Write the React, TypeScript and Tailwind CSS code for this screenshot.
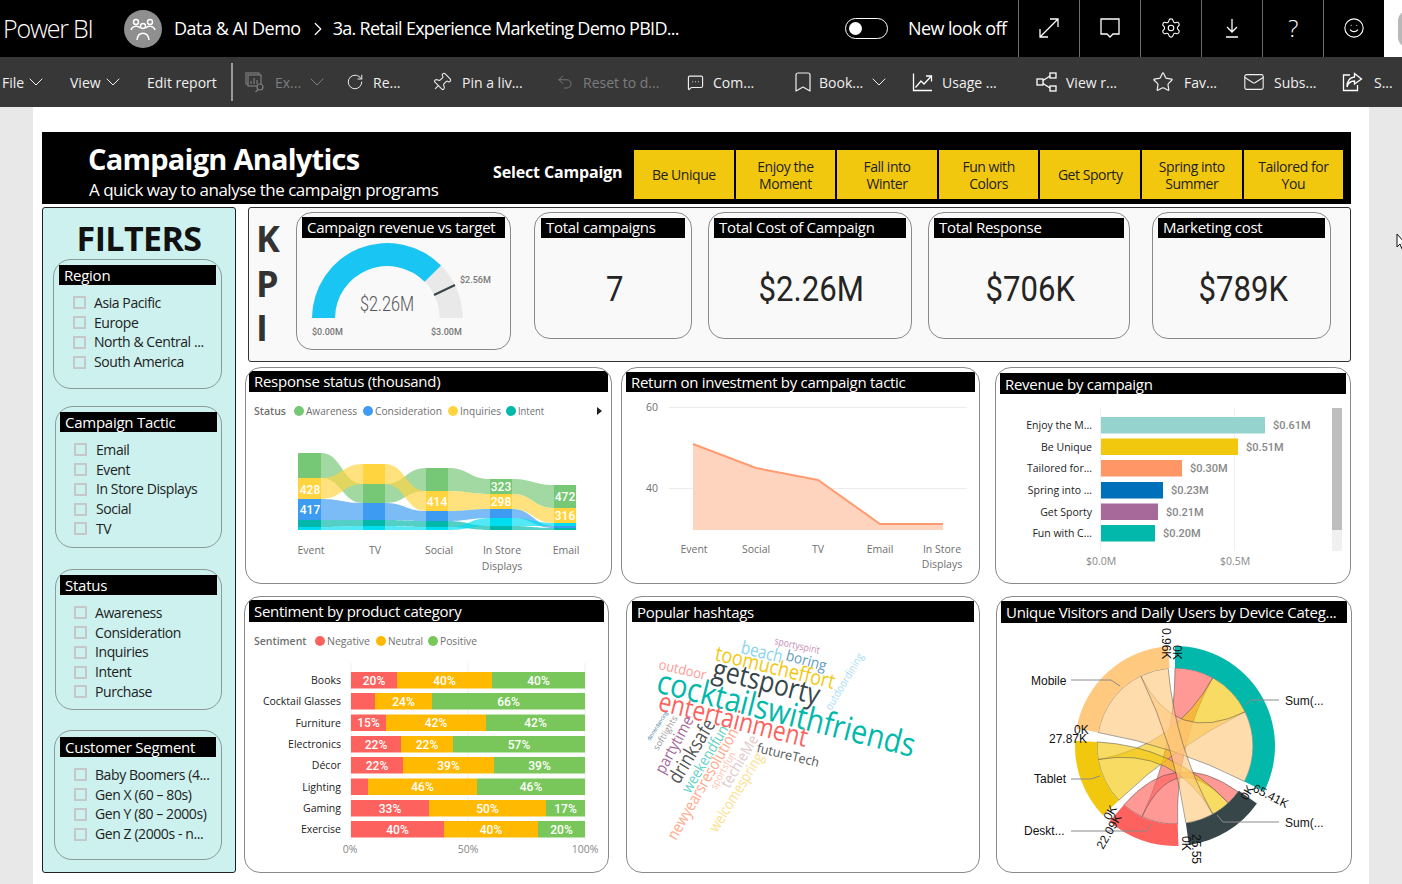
import clsx from "clsx";
import type { ReactNode } from "react";
import {
  Bookmark,
  ChevronDown,
  ChevronRight,
  Mail,
  MessageSquareMore,
  Pin,
  RotateCw,
  Settings,
  Smile,
  Star,
  Undo2,
} from "lucide-react";

const din = "font-['Roboto',sans-serif]";

function ExploreIcon() {
  return (
    <svg width="21" height="21" viewBox="0 0 21 21" fill="none" stroke="#7d7d7d" strokeWidth="1.2">
      <rect x="1" y="1" width="13" height="11" />
      <rect x="3" y="3" width="13" height="11" fill="#373737" />
      <path d="M6 12V9M9 12V6M12 12V8" />
      <circle cx="15" cy="15" r="3" fill="#373737" />
      <path d="M13 17.5l-2.5 2.5" />
    </svg>
  );
}

function RelatedIcon() {
  return (
    <svg width="21" height="20" viewBox="0 0 21 20" fill="none" stroke="#fff" strokeWidth="1.3">
      <rect x="1" y="7" width="6" height="6" />
      <rect x="14" y="1" width="6" height="5" />
      <rect x="14" y="14" width="6" height="5" />
      <path d="M7 8.5L14 4M7 11.5L14 16" />
    </svg>
  );
}

function UsageIcon() {
  return (
    <svg width="21" height="20" viewBox="0 0 21 20" fill="none" stroke="#fff" strokeWidth="1.3">
      <path d="M1.5 1.5v17h18.500" />
      <path d="M3.500 15.500l5.500-6.500 3 3 7-7.500" />
      <path d="M14 4h5.500v5.500" />
    </svg>
  );
}

function ShareIcon() {
  return (
    <svg width="21" height="20" viewBox="0 0 21 20" fill="none" stroke="#fff" strokeWidth="1.3">
      <path d="M8 3H1.5v15.5h14V13" />
      <path d="M12.5 1.5l7 5.5-7 5V9C8.5 9 6 11 5 15c0-6 3-9.500 7.500-10z" />
    </svg>
  );
}

const tools = [
  { label: "File", box: "w-[68px]", chevron: true },
  { label: "View", box: "w-[77px]", chevron: true },
  { label: "Edit report", box: "w-[84px]" },
  { label: "Ex...", box: "w-[101px] ml-[12px]", icon: <ExploreIcon />, iconBox: "w-[30px]", off: true, chevron: true, chevronBox: "ml-[4px]" },
  { label: "Re...", box: "w-[85px]", icon: <RotateCw size={18} strokeWidth={1.3} />, iconBox: "w-[27px]" },
  { label: "Pin a liv...", box: "w-[125px]", icon: <Pin size={21} strokeWidth={1.2} className="rotate-45" />, iconBox: "w-[31px]" },
  { label: "Reset to d...", box: "w-[131px]", icon: <Undo2 size={18} strokeWidth={1.2} color="#7d7d7d" />, iconBox: "w-[27px]", off: true },
  { label: "Com...", box: "w-[104px]", icon: <MessageSquareMore size={17} strokeWidth={1.6} />, iconBox: "w-[26px]" },
  { label: "Book...", box: "w-[121px]", icon: <Bookmark size={24} strokeWidth={1.2} />, iconBox: "w-[28px]", chevron: true, chevronBox: "ml-[4px]" },
  { label: "Usage ...", box: "w-[124px]", icon: <UsageIcon />, iconBox: "w-[30px]" },
  { label: "View r...", box: "w-[116px]", icon: <RelatedIcon />, iconBox: "w-[30px]" },
  { label: "Fav...", box: "w-[91px]", icon: <Star size={22} strokeWidth={1.3} />, iconBox: "w-[32px]" },
  { label: "Subs...", box: "w-[99px]", icon: <Mail size={22} strokeWidth={1.2} />, iconBox: "w-[31px]" },
  { label: "S...", box: "w-[60px]", icon: <ShareIcon />, iconBox: "w-[32px]" },
];

function TopBar() {
  return (
    <div className="h-[57px] bg-black text-white flex items-center text-[18px] tracking-[-0.5px]">
      <span className="ml-[3px] w-[121px] text-[25px] font-light tracking-[-1.2px]">Power BI</span>
      <div className="w-[38px] h-[38px] rounded-full bg-[#8f8f8f] flex items-center justify-center">
        <svg width="28" height="26" viewBox="0 0 28 26" fill="none" stroke="#fff" strokeWidth="1.4">
          <circle cx="7" cy="6" r="2.500" />
          <circle cx="21" cy="6" r="2.500" />
          <circle cx="14" cy="10" r="2.500" />
          <path d="M2 14c1-4 7-5 9-2M26 14c-1-4-7-5-9-2M8 24c1-9 11-9 12 0" />
        </svg>
      </div>
      <span className="ml-[12px]">Data &amp; AI Demo</span>
      <ChevronRight size={22} strokeWidth={1.3} className="ml-[6px] mr-[4px]" />
      <span className="tracking-[-0.72px]">3a. Retail Experience Marketing Demo PBID...</span>
      <div className="ml-auto flex items-center h-full">
        <div className="w-[43px] h-[21px] rounded-full border-[1.5px] border-white flex items-center pl-[3px]">
          <div className="w-[13px] h-[13px] rounded-full bg-white" />
        </div>
        <span className="ml-[20px] w-[110px] tracking-[-0.6px]">New look off</span>
        <HeaderCell>
          <svg width="22" height="22" viewBox="0 0 22 22" fill="none" stroke="#fff" strokeWidth="1.3">
            <path d="M2 20L20 2M12 2h8v8M2 12v8h8" />
          </svg>
        </HeaderCell>
        <HeaderCell>
          <svg width="22" height="22" viewBox="0 0 22 22" fill="none" stroke="#fff" strokeWidth="1.3">
            <path d="M2 2h18v15h-6l-3 3-3-3H2z" />
          </svg>
        </HeaderCell>
        <HeaderCell>
          <Settings size={22} strokeWidth={1.2} />
        </HeaderCell>
        <HeaderCell>
          <svg width="16" height="22" viewBox="0 0 16 22" fill="none" stroke="#fff" strokeWidth="1.3">
            <path d="M8 2v13M3 10l5 5 5-5M2 20h12" />
          </svg>
        </HeaderCell>
        <HeaderCell>
          <span className="text-[24px] font-light">?</span>
        </HeaderCell>
        <HeaderCell>
          <Smile size={22} strokeWidth={1.2} />
        </HeaderCell>
        <div className="w-[18px] h-full bg-white overflow-hidden flex items-center">
          <div className="ml-[14px] w-[22px] h-[38px] shrink-0 rounded-full bg-[#b8b8b8]" />
        </div>
      </div>
    </div>
  );
}

function HeaderCell({ children }: { children: ReactNode }) {
  return (
    <div className="w-[61px] h-full border-l border-[#6b6b6b] flex items-center justify-center pb-[2px]">
      {children}
    </div>
  );
}

function ToolBar() {
  return (
    <div className="h-[50px] bg-[#373737] text-[#f0f0f0] text-[14px] flex items-center pl-[2px] whitespace-nowrap">
      {tools.map((t, i) => (
        <div key={t.label} className="contents">
          <div className={clsx("flex items-center", t.box, t.off && "text-[#7d7d7d]")}>
            {t.icon && <span className={clsx("flex items-center", t.iconBox)}>{t.icon}</span>}
            <span>{t.label}</span>
            {t.chevron && <ChevronDown size={24} strokeWidth={1} className={t.chevronBox} />}
          </div>
          {i === 2 && <div className="w-[2px] h-[38px] bg-[#9a9a9a]" />}
        </div>
      ))}
    </div>
  );
}

const campaigns = ["Be Unique", "Enjoy the Moment", "Fall into Winter", "Fun with Colors", "Get Sporty", "Spring into Summer", "Tailored for You"];

function ReportHeader() {
  return (
    <div className="h-[72px] bg-black text-white flex">
      <div className="ml-[46px] w-[405px] flex flex-col">
        <span className="mt-[7px] text-[29px] leading-[40px] font-bold tracking-[-0.75px]">Campaign Analytics</span>
        <span className="ml-[1px] mt-[1px] text-[17px] leading-[20px] tracking-[-0.5px]">A quick way to analyse the campaign programs</span>
      </div>
      <span className="mt-[29px] w-[141px] text-[16px] leading-[22px] font-bold tracking-[-0.15px]">Select Campaign</span>
      <div className="mt-[18px] flex gap-[2px]">
        {campaigns.map((c) => (
          <div
            key={c}
            className="w-[99.600px] h-[49px] bg-[#f2c80f] text-[#222] text-[14px] leading-[17px] tracking-[-0.45px] flex items-center justify-center text-center px-[12px]"
          >
            {c}
          </div>
        ))}
      </div>
    </div>
  );
}

function Slicer({ title, items, box, bar, list }: { title: string; items: string[]; box: string; bar: string; list: string }) {
  return (
    <div className={clsx("rounded-[18px] border border-[#8c9a98]", box)}>
      <div className={clsx("h-[20px] bg-black text-white text-[15px] leading-[20px] pl-[5px] tracking-[-0.25px]", bar)}>{title}</div>
      <div className={clsx("mt-[8px] text-[14px] leading-[20px] text-[#222] tracking-[-0.42px]", list)}>
        {items.map((item) => (
          <div key={item} className="h-[19.750px] flex items-center whitespace-nowrap">
            <span className="w-[13px] h-[13px] border-2 border-[#c4c8c8] shrink-0 mr-[8px]" />
            {item}
          </div>
        ))}
      </div>
    </div>
  );
}

function Filters() {
  return (
    <div className="w-[194px] h-[666px] shrink-0 bg-[#ccf1ee] border border-[#222] rounded-[3px] pt-[10px]">
      <div className="h-[41px] text-[34px] leading-[40px] font-bold text-center text-[#111] tracking-[-0.6px]">FILTERS</div>
      <Slicer
        title="Region"
        items={["Asia Pacific", "Europe", "North & Central ...", "South America"]}
        box="ml-[10px] w-[169px] h-[130px] pt-[5px]"
        bar="mx-[5px]"
        list="ml-[19px]"
      />
      <Slicer
        title="Campaign Tactic"
        items={["Email", "Event", "In Store Displays", "Social", "TV"]}
        box="mt-[17px] ml-[12px] w-[167px] h-[142px] pt-[5px]"
        bar="mx-[4px]"
        list="ml-[18px] [&>div>span]:mr-[9px]"
      />
      <Slicer
        title="Status"
        items={["Awareness", "Consideration", "Inquiries", "Intent", "Purchase"]}
        box="mt-[21px] ml-[12px] w-[167px] h-[141px] pt-[5px]"
        bar="mx-[4px]"
        list="ml-[18px] [&>div>span]:mr-[8px]"
      />
      <Slicer
        title="Customer Segment"
        items={["Baby Boomers (4...", "Gen X (60 – 80s)", "Gen Y (80 – 2000s)", "Gen Z (2000s - n..."]}
        box="mt-[20px] ml-[11px] w-[168px] h-[130px] pt-[6px]"
        bar="mx-[5px]"
        list="ml-[19px] [&>div>span]:mr-[8px]"
      />
    </div>
  );
}

function Card({ title, box, bar, children }: { title: string; box: string; bar: string; children: ReactNode }) {
  return (
    <div className={clsx("rounded-[16px] border border-[#8a8a8a] bg-white overflow-hidden shrink-0", box)}>
      <div className={clsx("bg-black text-white text-[15px] pl-[5px] whitespace-nowrap tracking-[-0.28px]", bar)}>{title}</div>
      {children}
    </div>
  );
}

function KpiCard({ title, value, box, bar }: { title: string; value: string; box: string; bar: string }) {
  return (
    <Card title={title} box={clsx("h-[127px] !bg-[#f9f9f9] pt-[5px]", box)} bar={clsx("h-[20px] leading-[19px]", bar)}>
      <div className={clsx("h-[101px] flex items-center justify-center text-[35px] text-[#252423] pt-[4px] pl-[3px]", din)}>
        <span className="inline-block scale-x-[0.89]">{value}</span>
      </div>
    </Card>
  );
}

function Gauge() {
  return (
    <svg className="block w-[213px] h-[111px]" viewBox="297 238 213 111">
      <path d="M312 318A75.300 75.300 0 0 1 462.600 318H439.600A52.300 52.300 0 0 0 335 318Z" fill="#e9e9e9" />
      <path d="M312 318A75.300 75.300 0 0 1 441 265.600L424.600 281.700A52.300 52.300 0 0 0 335 318Z" fill="#19c5f3" />
      <path d="M434 295L455 285" stroke="#374649" strokeWidth="2" />
      <text x="360" y="311" fontSize="20" fill="#555" fontWeight="300" textLength={54} lengthAdjust="spacingAndGlyphs" className={din}>$2.26M</text>
      <g fontSize="9" fontWeight="500" fill="#777" className={din}>
        <text x="312" y="335">$0.00M</text>
        <text x="431" y="335">$3.00M</text>
        <text x="460" y="283">$2.56M</text>
      </g>
    </svg>
  );
}

const greyLabel = "#6f6f6f";

const sankeyCols = [[298, 321], [363, 385], [426, 448], [490, 512], [554, 576]];
const sankeyBands = [
  { color: "#76c776", ys: [[453, 478], [484, 503], [468, 491], [479, 494], [485, 508]] },
  { color: "#ffd43f", ys: [[478, 499], [464, 484], [491, 511], [494, 509], [508, 523]] },
  { color: "#3d9cf2", ys: [[499, 520], [503, 520], [511, 521], [509, 518], [526, 528]] },
  { color: "#01b8aa", ys: [[520, 527], [520, 526], [521, 527], [526, 530], [528, 530]] },
  { color: "#00ddf0", ys: [[527, 530], [526, 530], [527, 530], [518, 526], [523, 526]] },
];

function Legend({ label, x, y, items }: { label: string; x: number; y: number; items: { x: number; len: number; name: string; color: string }[] }) {
  return (
    <g fontSize="10.500" fill={greyLabel}>
      <text x={x} y={y + 4} fontWeight="600">{label}</text>
      {items.map((it) => (
        <g key={it.name}>
          <circle cx={it.x} cy={y} r="5" fill={it.color} />
          <text x={it.x + 7} y={y + 4} textLength={it.len} lengthAdjust="spacingAndGlyphs">{it.name}</text>
        </g>
      ))}
    </g>
  );
}

function Sankey() {
  return (
    <svg className="block w-[365px] h-[191px]" viewBox="246 392 365 191">
      <Legend
        label="Status"
        x={254}
        y={411}
        items={[
          { x: 299, len: 51, name: "Awareness", color: "#76c776" },
          { x: 368, len: 67, name: "Consideration", color: "#3d9cf2" },
          { x: 453, len: 41, name: "Inquiries", color: "#ffd43f" },
          { x: 511, len: 26, name: "Intent", color: "#01b8aa" },
        ]}
      />
      <path d="M597 407l5 4-5 4z" fill="#222" />
      {sankeyBands.map((b) => (
        <g key={b.color} fill={b.color}>
          {sankeyCols.map(([x1, x2], i) => {
            const [t, bot] = b.ys[i];
            const next = sankeyCols[i + 1];
            if (!next) return <rect key={i} x={x1} y={t} width={x2 - x1} height={bot - t} />;
            const [t2, bot2] = b.ys[i + 1];
            const m = (x2 + next[0]) / 2;
            return (
              <g key={i}>
                <rect x={x1} y={t} width={x2 - x1} height={bot - t} />
                <path
                  opacity="0.68"
                  d={`M${x2} ${t}C${m} ${t} ${m} ${t2} ${next[0]} ${t2}L${next[0]} ${bot2}C${m} ${bot2} ${m} ${bot} ${x2} ${bot}Z`}
                />
              </g>
            );
          })}
        </g>
      ))}
      <g fontSize="12" fill="#fff" fontWeight="500" textAnchor="middle" className={din}>
        <text x="310" y="494">428</text>
        <text x="310" y="514">417</text>
        <text x="437" y="506">414</text>
        <text x="501" y="491">323</text>
        <text x="501" y="506">298</text>
        <text x="565" y="501">472</text>
        <text x="565" y="520">316</text>
      </g>
      <g fontSize="10.500" fill={greyLabel} textAnchor="middle">
        <text x="311" y="554">Event</text>
        <text x="375" y="554">TV</text>
        <text x="439" y="554">Social</text>
        <text x="502" y="554">In Store</text>
        <text x="502" y="570">Displays</text>
        <text x="566" y="554">Email</text>
      </g>
    </svg>
  );
}

function RoiChart() {
  return (
    <svg className="block w-[357px] h-[191px]" viewBox="622 392 357 191">
      <path d="M669 407.500H967M669 488.500H967" stroke="#ececec" />
      <path d="M693 444L756 468L818 480L880 524L943 524V530H693Z" fill="#ffd4bf" />
      <path d="M693 444L756 468L818 480L880 524L943 524" fill="none" stroke="#ff9b70" strokeWidth="2" />
      <g fontSize="10.500" fill={greyLabel} textAnchor="middle">
        <text x="652" y="411">60</text>
        <text x="652" y="492">40</text>
        <text x="694" y="553">Event</text>
        <text x="756" y="553">Social</text>
        <text x="818" y="553">TV</text>
        <text x="880" y="553">Email</text>
        <text x="942" y="553">In Store</text>
        <text x="942" y="568">Displays</text>
      </g>
    </svg>
  );
}

const revenue = [
  { name: "Enjoy the M...", y: 417, end: 1265, color: "#95d3cf", value: "$0.61M" },
  { name: "Be Unique", y: 438.500, end: 1238, color: "#f2c80f", value: "$0.51M" },
  { name: "Tailored for...", y: 460, end: 1182, color: "#fe9666", value: "$0.30M" },
  { name: "Spring into ...", y: 482, end: 1163, color: "#0070ba", value: "$0.23M" },
  { name: "Get Sporty", y: 503.500, end: 1158, color: "#a66999", value: "$0.21M" },
  { name: "Fun with C...", y: 525, end: 1155, color: "#01b8aa", value: "$0.20M" },
];

function RevenueChart() {
  return (
    <svg className="block w-[354px] h-[189px]" viewBox="996 394 354 189">
      <path d="M1100.500 408V551M1234.500 408V551" stroke="#efefef" />
      <rect x="1332" y="408" width="10" height="122" fill="#bebebe" />
      <rect x="1332" y="530" width="10" height="21" fill="#f0f0f0" />
      {revenue.map((r) => (
        <g key={r.name}>
          <rect x="1101" y={r.y} width={r.end - 1101} height="16.500" fill={r.color} />
          <text x="1092" y={r.y + 12} fontSize="10.500" fill="#222" textAnchor="end">{r.name}</text>
          <text x={r.end + 8} y={r.y + 12} fontSize="11" fontWeight="500" fill="#888" className={din}>{r.value}</text>
        </g>
      ))}
      <g fontSize="10.500" fill="#888" textAnchor="middle">
        <text x="1101" y="565">$0.0M</text>
        <text x="1235" y="565">$0.5M</text>
      </g>
    </svg>
  );
}

const sentiment = [
  { name: "Books", y: 672, a: 397, b: 492, t: ["20%", "40%", "40%"] },
  { name: "Cocktail Glasses", y: 693, a: 375, b: 432, t: ["", "24%", "66%"] },
  { name: "Furniture", y: 714.500, a: 386, b: 486, t: ["15%", "42%", "42%"] },
  { name: "Electronics", y: 736, a: 401, b: 453, t: ["22%", "22%", "57%"] },
  { name: "Décor", y: 757, a: 403, b: 494, t: ["22%", "39%", "39%"] },
  { name: "Lighting", y: 778.500, a: 368, b: 477, t: ["", "46%", "46%"] },
  { name: "Gaming", y: 800, a: 429, b: 546, t: ["33%", "50%", "17%"] },
  { name: "Exercise", y: 821, a: 444, b: 538, t: ["40%", "40%", "20%"] },
];

function SentimentChart() {
  return (
    <svg className="block w-[363px] h-[250px]" viewBox="245 622 363 250">
      <Legend
        label="Sentiment"
        x={254}
        y={641}
        items={[
          { x: 320, len: 43, name: "Negative", color: "#fd625e" },
          { x: 381, len: 35, name: "Neutral", color: "#ffb900" },
          { x: 433, len: 37, name: "Positive", color: "#79c75b" },
        ]}
      />
      <path d="M351 663V840M468 663V840M585 663V840" stroke="#efefef" />
      {sentiment.map((s) => (
        <g key={s.name}>
          <rect x="351" y={s.y} width={s.a - 351} height="16.500" fill="#fd625e" />
          <rect x={s.a} y={s.y} width={s.b - s.a} height="16.500" fill="#ffb900" />
          <rect x={s.b} y={s.y} width={585 - s.b} height="16.500" fill="#79c75b" />
          <text x="341" y={s.y + 12} fontSize="10.500" fill="#222" textAnchor="end">{s.name}</text>
          <g fontSize="12" fontWeight="500" fill="#fff" textAnchor="middle" className={din}>
            <text x={(351 + s.a) / 2} y={s.y + 12.500}>{s.t[0]}</text>
            <text x={(s.a + s.b) / 2} y={s.y + 12.500}>{s.t[1]}</text>
            <text x={(s.b + 585) / 2} y={s.y + 12.500}>{s.t[2]}</text>
          </g>
        </g>
      ))}
      <g fontSize="10.500" fill="#888" textAnchor="middle">
        <text x="350" y="853">0%</text>
        <text x="468" y="853">50%</text>
        <text x="585" y="853">100%</text>
      </g>
    </svg>
  );
}

const words = [
  { t: "cocktailswithfriends", x: 655, y: 692, x2: 912, y2: 757, size: 33, color: "#01b8aa" },
  { t: "getsporty", x: 711, y: 678, x2: 817, y2: 705, size: 29, color: "#374649" },
  { t: "entertainment", x: 657, y: 710, x2: 805, y2: 747, size: 27, color: "#fd625e" },
  { t: "toomucheffort", x: 714, y: 660, x2: 833, y2: 689, size: 21, color: "#f2c80f" },
  { t: "beach", x: 740, y: 653, x2: 781, y2: 663, size: 18, color: "#8ad4eb" },
  { t: "boring", x: 785, y: 660, x2: 825, y2: 671, size: 15, color: "#5f9dc0" },
  { t: "sportyspirit", x: 774, y: 644, x2: 819, y2: 654, size: 10, color: "#c78db8" },
  { t: "outdoor", x: 658, y: 669, x2: 705, y2: 680, size: 14, color: "#fd9a96" },
  { t: "futureTech", x: 756, y: 752, x2: 818, y2: 767, size: 13, color: "#555" },
  { t: "outdoordining", x: 831, y: 711, x2: 864, y2: 656, size: 11, color: "#a8ddef" },
  { t: "partytime", x: 664, y: 775, x2: 694, y2: 720, size: 16, color: "#a66999" },
  { t: "drinksafe", x: 679, y: 785, x2: 716, y2: 724, size: 20, color: "#555" },
  { t: "weekendfun", x: 690, y: 794, x2: 729, y2: 729, size: 15, color: "#5fd0c5" },
  { t: "newyearsresolution", x: 676, y: 841, x2: 739, y2: 732, size: 16, color: "#ffa98a" },
  { t: "sportsfun", x: 716, y: 790, x2: 736, y2: 754, size: 10, color: "#ffc4ac" },
  { t: "techieMe", x: 729, y: 789, x2: 759, y2: 739, size: 15, color: "#e0c8c8" },
  { t: "welcomespring", x: 717, y: 833, x2: 764, y2: 757, size: 15, color: "#fbe08a" },
  { t: "softlights", x: 658, y: 751, x2: 678, y2: 718, size: 9, color: "#999" },
  { t: "dinnerdancing", x: 650, y: 741, x2: 668, y2: 713, size: 5.500, color: "#2a6f97" },
];

function WordCloud() {
  return (
    <svg className="block w-[352px] h-[250px]" viewBox="627 622 352 250">
      {words.map((w) => (
        <text
          key={w.t}
          transform={`translate(${w.x} ${w.y}) rotate(${(Math.atan2(w.y2 - w.y, w.x2 - w.x) * 180) / Math.PI})`}
          fontSize={w.size}
          fill={w.color}
          textLength={Math.hypot(w.x2 - w.x, w.y2 - w.y)}
          lengthAdjust="spacingAndGlyphs"
        >
          {w.t}
        </text>
      ))}
    </svg>
  );
}

const cx = 1174;
const cy = 746;

function pt(r: number, deg: number) {
  const a = (deg * Math.PI) / 180;
  return `${(cx + r * Math.sin(a)).toFixed(1)} ${(cy - r * Math.cos(a)).toFixed(1)}`;
}

function ringPath(a: number, b: number) {
  const large = b - a > 180 ? 1 : 0;
  return `M${pt(100, a)}A100 100 0 ${large} 1 ${pt(100, b)}L${pt(78, b)}A78 78 0 ${large} 0 ${pt(78, a)}Z`;
}

function ribbon(a0: number, a1: number, b0: number, b1: number) {
  return `M${pt(78, a0)}A78 78 0 0 1 ${pt(78, a1)}Q${cx} ${cy} ${pt(78, b0)}A78 78 0 0 1 ${pt(78, b1)}Q${cx} ${cy} ${pt(78, a0)}Z`;
}

const ring = [
  { a: 0, b: 117, color: "#01b8aa" },
  { a: 125, b: 172, color: "#374649" },
  { a: 178, b: 221, color: "#fd625e" },
  { a: 226, b: 273, color: "#f2c80f" },
  { a: 280, b: 356, color: "#ffca7f" },
];

// red first, the orange bands lie over the others in the centre
const ribbons = [
  { p: ribbon(0, 29, 178, 205), color: "#fd625e" },
  { p: ribbon(126, 137, 205, 221), color: "#fd625e" },
  { p: ribbon(29, 64, 226, 260), color: "#f2c80f" },
  { p: ribbon(137, 151, 260, 273), color: "#f2c80f" },
  { p: ribbon(64, 117, 280, 334), color: "#ffca7f" },
  { p: ribbon(151, 172, 334, 355), color: "#ffca7f" },
];

function ChordChart() {
  return (
    <svg className="block w-[354px] h-[250px] font-['Liberation_Sans',sans-serif]" viewBox="996 623 354 250">
      {ribbons.map((r, i) => (
        <path key={i} d={r.p} fill={r.color} fillOpacity="0.65" stroke="#444" strokeOpacity="0.6" strokeWidth="0.8" />
      ))}
      {ring.map((s) => (
        <path key={s.color} d={ringPath(s.a, s.b)} fill={s.color} />
      ))}
      <g fill="none" stroke="#8a8a8a">
        <path d="M1070 680H1110L1119 686" />
        <path d="M1278 700H1250L1244 705" />
        <path d="M1070 779H1090L1099 776" />
        <path d="M1278 822H1222L1216 815" />
        <path d="M1070 831H1146L1150 824" />
      </g>
      <g fontSize="12" fill="#111">
        <text x="1030" y="685">Mobile</text>
        <text x="1284" y="705">Sum(...</text>
        <text x="1033" y="783">Tablet</text>
        <text x="1284" y="827">Sum(...</text>
        <text x="1023" y="835">Deskt...</text>
        <text x="1048" y="743">27.87K</text>
        <text x="1073" y="734">0K</text>
        <text transform="translate(1161 628) rotate(90)">0.96K</text>
        <text transform="translate(1172 645) rotate(90)">0K</text>
        <text transform="translate(1251 791) rotate(27)">65.41K</text>
        <text transform="translate(1246 801) rotate(-60)">0K</text>
        <text transform="translate(1181 836) rotate(90)">0K</text>
        <text transform="translate(1191 834) rotate(90)">25.55</text>
        <text transform="translate(1102 850) rotate(-60)">22.09K</text>
        <text transform="translate(1109 821) rotate(-60)">0K</text>
      </g>
    </svg>
  );
}

export default function App() {
  return (
    <div className="relative w-[1402px] h-[884px] overflow-hidden bg-[#e8e8e8] font-['Open_Sans',sans-serif]">
      <TopBar />
      <ToolBar />
      <div className="ml-[33px] w-[1336px] h-[777px] bg-white pl-[9px] pt-[25px]">
        <div className="w-[1309px]">
          <ReportHeader />
          <div className="mt-[3px] flex">
            <Filters />
            <div className="ml-[7px] w-[1108px]">
              <div className="ml-[5px] w-[1103px] h-[155px] bg-[#f9f9f9] border border-[#333] rounded-[3px] flex pt-[4px]">
                <div className="w-[47px] pl-[7px] pt-[5px] text-[36px] leading-[44.500px] font-bold text-[#333]">
                  <div>K</div>
                  <div>P</div>
                  <div>I</div>
                </div>
                <Card title="Campaign revenue vs target" box="w-[215px] h-[138px] !bg-[#f9f9f9] pt-[4px]" bar="mx-[5px] h-[21px] leading-[20px]">
                  <Gauge />
                </Card>
                <KpiCard title="Total campaigns" value="7" box="ml-[23px] w-[158px]" bar="mx-[6px]" />
                <KpiCard title="Total Cost of Campaign" value="$2.26M" box="ml-[16px] w-[204px]" bar="mx-[5px]" />
                <KpiCard title="Total Response" value="$706K" box="ml-[16px] w-[202px]" bar="mx-[5px]" />
                <KpiCard title="Marketing cost" value="$789K" box="ml-[22px] w-[179px]" bar="mx-[5px]" />
              </div>
              <div className="mt-[5px] flex h-[217px]">
                <Card title="Response status (thousand)" box="ml-[2px] w-[367px] h-[217px] pt-[3px]" bar="mx-[3px] h-[21px] leading-[20px]">
                  <Sankey />
                </Card>
                <Card title="Return on investment by campaign tactic" box="ml-[9px] w-[359px] h-[217px] pt-[4px]" bar="mx-[4px] h-[20px] leading-[20px]">
                  <RoiChart />
                </Card>
                <Card title="Revenue by campaign" box="ml-[15px] w-[356px] h-[217px] pt-[5px]" bar="mx-[4px] h-[21px] leading-[22px]">
                  <RevenueChart />
                </Card>
              </div>
              <div className="mt-[12px] flex h-[277px]">
                <Card title="Sentiment by product category" box="ml-[1px] w-[365px] h-[277px] pt-[3px]" bar="mx-[4px] h-[22px] leading-[22px]">
                  <SentimentChart />
                </Card>
                <Card title="Popular hashtags" box="ml-[17px] w-[354px] h-[277px] pt-[4px]" bar="mx-[5px] h-[21px] leading-[22px]">
                  <WordCloud />
                </Card>
                <Card title="Unique Visitors and Daily Users by Device Categ..." box="ml-[16px] w-[356px] h-[277px] pt-[4px]" bar="mx-[4px] h-[22px] leading-[22px]">
                  <ChordChart />
                </Card>
              </div>
            </div>
          </div>
        </div>
      </div>
      <svg className="absolute left-[1396px] top-[233px]" width="9" height="17" viewBox="0 0 9 17" fill="#fff" stroke="#111">
        <path d="M1 1v13l3-3 2 5 2-1-2-5h3z" />
      </svg>
    </div>
  );
}
